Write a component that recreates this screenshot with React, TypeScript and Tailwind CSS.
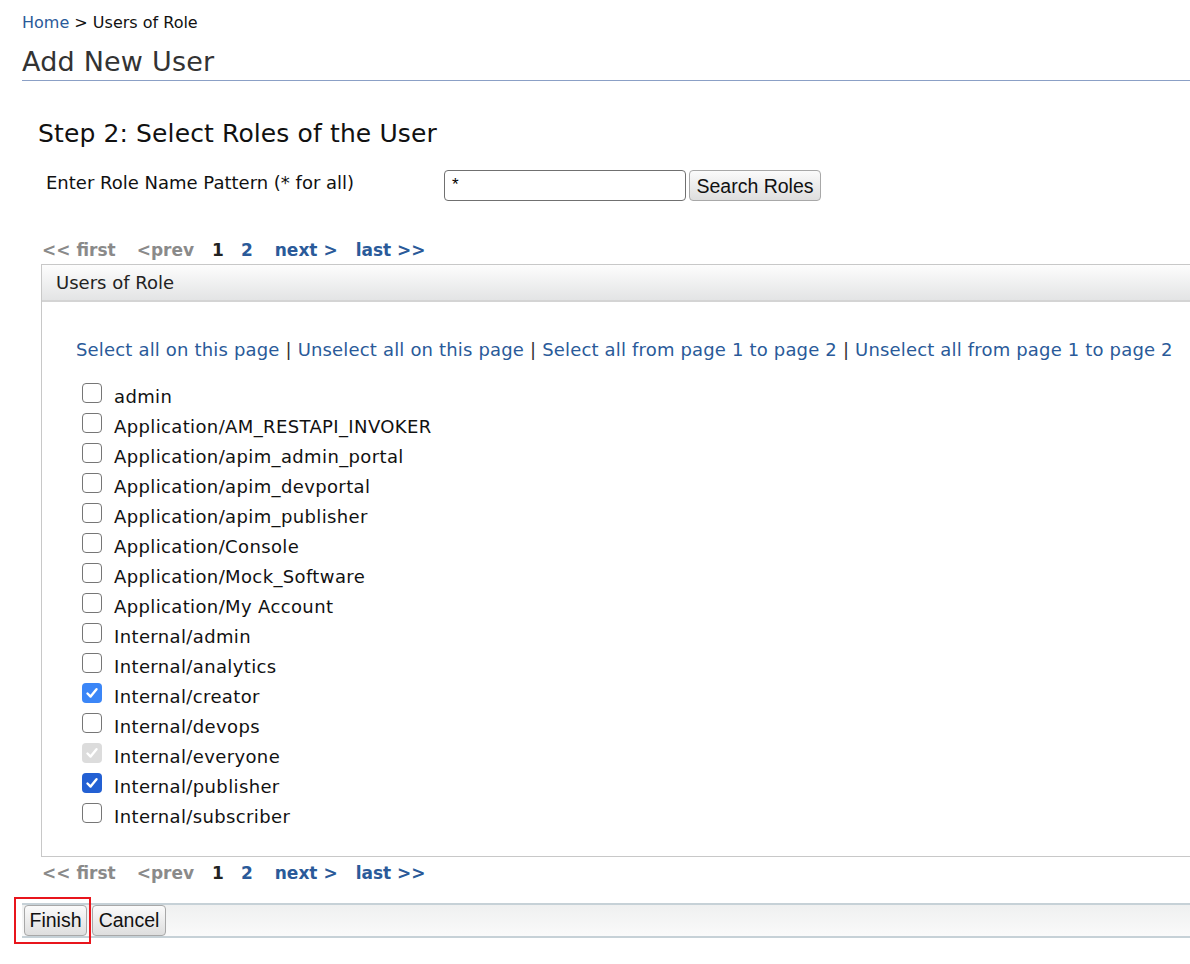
import React from "react";

const roles: { name: string; state: "none" | "checked" | "checkedFocus" | "disabled" }[] = [
  { name: "admin", state: "none" },
  { name: "Application/AM_RESTAPI_INVOKER", state: "none" },
  { name: "Application/apim_admin_portal", state: "none" },
  { name: "Application/apim_devportal", state: "none" },
  { name: "Application/apim_publisher", state: "none" },
  { name: "Application/Console", state: "none" },
  { name: "Application/Mock_Software", state: "none" },
  { name: "Application/My Account", state: "none" },
  { name: "Internal/admin", state: "none" },
  { name: "Internal/analytics", state: "none" },
  { name: "Internal/creator", state: "checked" },
  { name: "Internal/devops", state: "none" },
  { name: "Internal/everyone", state: "disabled" },
  { name: "Internal/publisher", state: "checkedFocus" },
  { name: "Internal/subscriber", state: "none" },
];

function Check({ state }: { state: string }) {
  if (state === "none") {
    return <span className="block w-[20px] h-[20px] rounded-[4px] border border-[#767676] bg-white" />;
  }
  const bg =
    state === "checked" ? "bg-[#3b86f7]" : state === "checkedFocus" ? "bg-[#2360d3]" : "bg-[#dcdcdc]";
  return (
    <span className={`flex items-center justify-center w-[20px] h-[20px] rounded-[4px] ${bg}`}>
      <svg width="14" height="14" viewBox="0 0 14 14">
        <path d="M2.5 7.5 L5.6 10.6 L11.5 3.2" fill="none" stroke="white" strokeWidth="2.4" strokeLinecap="round" strokeLinejoin="round" />
      </svg>
    </span>
  );
}

function Pager() {
  return (
    <div className="flex items-center h-[24px] pl-[42px] text-[17px] font-bold">
      <span className="text-[#8a8a8a]">&lt;&lt; first</span>
      <span className="text-[#8a8a8a] ml-[21px]">&lt;prev</span>
      <span className="text-[#222] ml-[18px]">1</span>
      <span className="text-[#2a5a99] ml-[17px]">2</span>
      <span className="text-[#2a5a99] ml-[22px]">next &gt;</span>
      <span className="text-[#2a5a99] ml-[18px]">last &gt;&gt;</span>
    </div>
  );
}

export default function App() {
  return (
    <div className="w-[1190px] h-[964px] overflow-hidden bg-white font-['DejaVu_Sans','Noto_Sans',sans-serif] text-black">
      <div className="pl-[22px] pt-[12px] text-[16px] leading-[22px]">
        <span className="text-[#2a5a99]">Home</span>
        <span className="text-[#111]"> &gt; Users of Role</span>
      </div>
      <div className="ml-[22px] mt-[11px] border-b border-[#8ba0c6] h-[36px]">
        <h1 className="text-[27px] leading-[33px] text-[#333] tracking-[0.2px]">Add New User</h1>
      </div>
      <h2 className="ml-[38px] mt-[38px] text-[25px] leading-[30px] tracking-[0.12px] text-[#111]">
        Step 2: Select Roles of the User
      </h2>
      <div className="flex items-center mt-[21px] h-[31px]">
        <span className="ml-[46px] w-[398px] text-[18px] text-[#111] -mt-[6px]">Enter Role Name Pattern (* for all)</span>
        <div className="w-[242px] h-[31px] border border-[#707070] rounded-[4px] px-[7px] pt-[2px] font-['Liberation_Sans',sans-serif] text-[17px] leading-[24px] text-black">
          *
        </div>
        <button className="ml-[3px] h-[31px] w-[132px] border border-[#a8a8a8] rounded-[4px] bg-gradient-to-b from-[#fbfbfb] to-[#dedede] font-['Liberation_Sans',sans-serif] text-[19.5px] leading-[28px] text-[#111]">
          Search Roles
        </button>
      </div>
      <div className="mt-[38px]">
        <Pager />
      </div>
      <div className="ml-[41px] mt-[1px] w-[1170px] h-[593px] border border-[#c8c8c8] border-r-0">
        <div className="h-[37px] flex items-center pl-[14px] bg-gradient-to-b from-[#fdfdfd] to-[#e3e4e5] border-b-[2px] border-[#d4d4d4] text-[18px] text-[#222]">
          Users of Role
        </div>
        <div className="pl-[34px] mt-[36px] text-[18px] leading-[24px] tracking-[0.17px] text-[#2a5a99] whitespace-nowrap">
          Select all on this page <span className="text-[#333]">|</span> Unselect all on this page{" "}
          <span className="text-[#333]">|</span> Select all from page 1 to page 2{" "}
          <span className="text-[#333]">|</span> Unselect all from page 1 to page 2
        </div>
        <div className="mt-[19px] flex flex-col">
          {roles.map((r) => (
            <div key={r.name} className="flex items-center h-[30px] pl-[40px]">
              <span className="-mt-[6px]">
                <Check state={r.state} />
              </span>
              <span className="ml-[12px] text-[18px] tracking-[0.37px] text-[#111]">{r.name}</span>
            </div>
          ))}
        </div>
      </div>
      <div className="mt-[5px]">
        <Pager />
      </div>
      <div className="ml-[22px] mt-[17px] h-[35px] border-t-[2px] border-b-[2px] border-[#c6d1d7] bg-gradient-to-b from-[#eff0f0] to-[#fafafa] flex items-center pl-[2px] relative">
        <div className="absolute left-[-8px] top-[-8px] w-[77px] h-[47px] border-[2px] border-[#e8151c]" />
        <button className="h-[31px] w-[63px] border border-[#a8a8a8] rounded-[4px] bg-gradient-to-b from-[#fbfbfb] to-[#dedede] font-['Liberation_Sans',sans-serif] text-[19.5px] text-[#111]">
          Finish
        </button>
        <button className="ml-[5px] h-[31px] w-[74px] border border-[#a8a8a8] rounded-[4px] bg-gradient-to-b from-[#fbfbfb] to-[#dedede] font-['Liberation_Sans',sans-serif] text-[19.5px] text-[#111]">
          Cancel
        </button>
      </div>
    </div>
  );
}
